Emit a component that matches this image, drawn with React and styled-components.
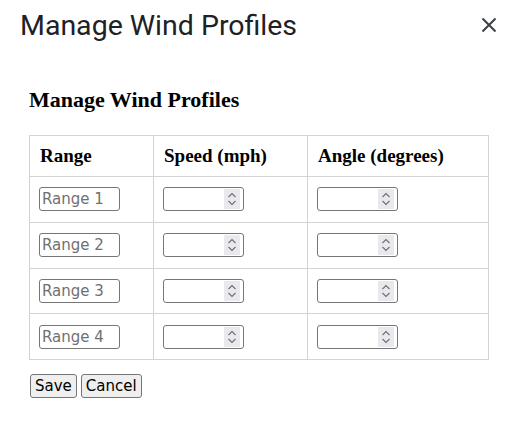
import React from 'react'
import styled, { createGlobalStyle } from 'styled-components'

const GlobalStyle = createGlobalStyle`
  body {
    margin: 0;
    background: #ffffff;
    font-family: "Liberation Serif", serif;
  }
`

const ranges = ['Range 1', 'Range 2', 'Range 3', 'Range 4']

function NumberField() {
  return (
    <NumberWrap>
      <Field type="number" />
      <Spinner aria-hidden="true">
        <svg width="16" height="20" viewBox="0 0 16 20">
          <path d="M4.5 8 L8 4.5 L11.5 8" stroke="#6e6e73" strokeWidth="1.1" fill="none" />
          <path d="M4.5 12 L8 15.5 L11.5 12" stroke="#6e6e73" strokeWidth="1.1" fill="none" />
        </svg>
      </Spinner>
    </NumberWrap>
  )
}

function App() {
  return (
    <>
      <GlobalStyle />
      <Dialog>
        <Header>
          <Title>Manage Wind Profiles</Title>
          <CloseButton aria-label="Close">
            <svg width="16" height="16" viewBox="0 0 16 16">
              <path d="M1.5 1.5 L14.5 14.5 M14.5 1.5 L1.5 14.5" stroke="#3c4043" strokeWidth="2" fill="none" />
            </svg>
          </CloseButton>
        </Header>
        <Content>
          <Heading>Manage Wind Profiles</Heading>
          <Table>
            <thead>
              <tr>
                <Th w={124}>Range</Th>
                <Th w={154}>Speed (mph)</Th>
                <Th w={181}>Angle (degrees)</Th>
              </tr>
            </thead>
            <tbody>
              {ranges.map((r) => (
                <Row key={r}>
                  <Td><Field type="text" placeholder={r} /></Td>
                  <Td><NumberField /></Td>
                  <Td><NumberField /></Td>
                </Row>
              ))}
            </tbody>
          </Table>
          <Actions>
            <Button>Save</Button>
            <Button>Cancel</Button>
          </Actions>
        </Content>
      </Dialog>
    </>
  )
}

const Dialog = styled.div`
  width: 509px;
  height: 423px;
  box-sizing: border-box;
  background: #fff;
`
const Header = styled.div`
  display: flex;
  align-items: center;
  justify-content: space-between;
  padding: 6px 8px 0 20px;
  height: 38px;
`
const Title = styled.h2`
  margin: 0;
  font-family: Roboto, "Noto Sans", sans-serif;
  font-weight: 400;
  font-size: 28.5px;
  color: #202124;
`
const CloseButton = styled.button`
  display: flex;
  align-items: center;
  justify-content: center;
  width: 24px;
  height: 24px;
  padding: 0;
  border: none;
  background: transparent;
  cursor: pointer;
`
const Content = styled.div`
  padding: 0 20px 0 29px;
`
const Heading = styled.h3`
  margin: 43px 0 22px 0;
  font-family: "Liberation Serif", serif;
  font-weight: 700;
  font-size: 22px;
  line-height: 26px;
  color: #000;
`
const Table = styled.table`
  border-collapse: collapse;
  width: 460px;
  table-layout: fixed;
`
const Th = styled.th`
  width: ${(p) => p.w}px;
  height: 41px;
  box-sizing: border-box;
  padding: 0 10px;
  border: 1px solid #d3d3d3;
  text-align: left;
  font-family: "Liberation Serif", serif;
  font-weight: 700;
  font-size: 19px;
  color: #000;
`
const Row = styled.tr`
  height: 45.75px;
`
const Td = styled.td`
  padding: 0 9px;
  border: 1px solid #d3d3d3;
  vertical-align: middle;
`
const NumberWrap = styled.div`
  position: relative;
  width: 81px;
`
const Field = styled.input`
  display: block;
  box-sizing: border-box;
  width: 81px;
  height: 24px;
  padding: 0 2px;
  border: 1px solid #767676;
  border-radius: 3px;
  font-family: "DejaVu Sans", sans-serif;
  font-size: 15px;
  color: #000;
  background: #fff;
  &::placeholder {
    color: #707070;
  }
  &::-webkit-inner-spin-button,
  &::-webkit-outer-spin-button {
    -webkit-appearance: none;
    margin: 0;
  }
`
const Spinner = styled.span`
  position: absolute;
  top: 2px;
  right: 4px;
  width: 16px;
  height: 20px;
  background: #e9e9ed;
  pointer-events: none;
  svg {
    display: block;
  }
`
const Actions = styled.div`
  display: flex;
  gap: 4px;
  margin-top: 14px;
  padding-left: 1px;
`
const Button = styled.button`
  box-sizing: border-box;
  height: 24px;
  padding: 0 4px;
  border: 1px solid #767676;
  border-radius: 3px;
  background: #efefef;
  font-family: "DejaVu Sans", sans-serif;
  font-size: 15px;
  color: #000;
`

export default App
